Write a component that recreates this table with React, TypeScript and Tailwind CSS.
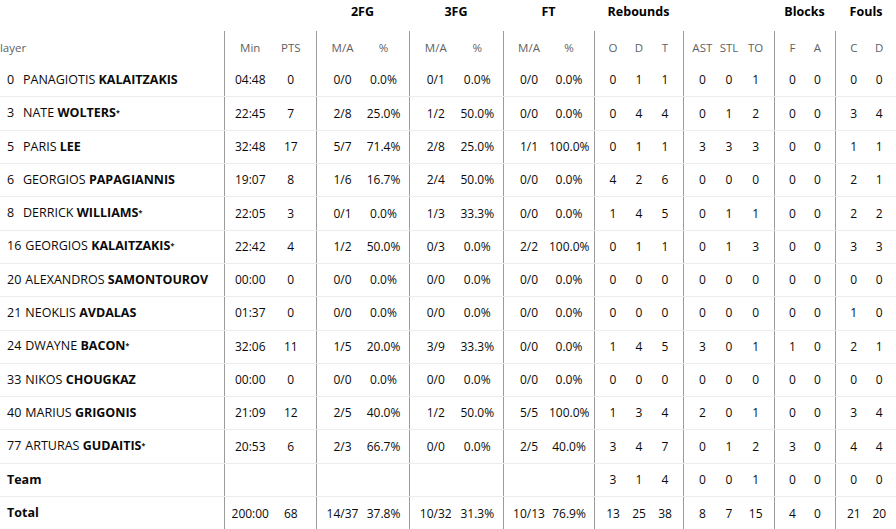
import React from "react";

type Row = {
  no: string;
  first: string;
  last: string;
  star: boolean;
  v: string[];
};

const raw: [string, string, string, boolean, string][] = [
  ["0", "PANAGIOTIS", "KALAITZAKIS", false, "04:48 0 0/0 0.0% 0/1 0.0% 0/0 0.0% 0 1 1 0 0 1 0 0 0 0"],
  ["3", "NATE", "WOLTERS", true, "22:45 7 2/8 25.0% 1/2 50.0% 0/0 0.0% 0 4 4 0 1 2 0 0 3 4"],
  ["5", "PARIS", "LEE", false, "32:48 17 5/7 71.4% 2/8 25.0% 1/1 100.0% 0 1 1 3 3 3 0 0 1 1"],
  ["6", "GEORGIOS", "PAPAGIANNIS", false, "19:07 8 1/6 16.7% 2/4 50.0% 0/0 0.0% 4 2 6 0 0 0 0 0 2 1"],
  ["8", "DERRICK", "WILLIAMS", true, "22:05 3 0/1 0.0% 1/3 33.3% 0/0 0.0% 1 4 5 0 1 1 0 0 2 2"],
  ["16", "GEORGIOS", "KALAITZAKIS", true, "22:42 4 1/2 50.0% 0/3 0.0% 2/2 100.0% 0 1 1 0 1 3 0 0 3 3"],
  ["20", "ALEXANDROS", "SAMONTOUROV", false, "00:00 0 0/0 0.0% 0/0 0.0% 0/0 0.0% 0 0 0 0 0 0 0 0 0 0"],
  ["21", "NEOKLIS", "AVDALAS", false, "01:37 0 0/0 0.0% 0/0 0.0% 0/0 0.0% 0 0 0 0 0 0 0 0 1 0"],
  ["24", "DWAYNE", "BACON", true, "32:06 11 1/5 20.0% 3/9 33.3% 0/0 0.0% 1 4 5 3 0 1 1 0 2 1"],
  ["33", "NIKOS", "CHOUGKAZ", false, "00:00 0 0/0 0.0% 0/0 0.0% 0/0 0.0% 0 0 0 0 0 0 0 0 0 0"],
  ["40", "MARIUS", "GRIGONIS", false, "21:09 12 2/5 40.0% 1/2 50.0% 5/5 100.0% 1 3 4 2 0 1 0 0 3 4"],
  ["77", "ARTURAS", "GUDAITIS", true, "20:53 6 2/3 66.7% 0/0 0.0% 2/5 40.0% 3 4 7 0 1 2 3 0 4 4"],
];

const rows: Row[] = raw.map(([no, first, last, star, v]) => ({
  no,
  first,
  last,
  star,
  v: v.split(" "),
}));

const teamVals = ["", "", "", "", "", "", "", "", "3", "1", "4", "0", "0", "1", "0", "0", "0", "0"];
const totalVals = "200:00 68 14/37 37.8% 10/32 31.3% 10/13 76.9% 13 25 38 8 7 15 4 0 21 20".split(" ");

const groups = [
  { w: "w-[92px]", cols: "grid-cols-2", n: 2, label: "", subs: ["Min", "PTS"] },
  { w: "w-[93px]", cols: "grid-cols-2", n: 2, label: "2FG", subs: ["M/A", "%"] },
  { w: "w-[94px]", cols: "grid-cols-2", n: 2, label: "3FG", subs: ["M/A", "%"] },
  { w: "w-[91px]", cols: "grid-cols-2", n: 2, label: "FT", subs: ["M/A", "%"] },
  { w: "w-[89px]", cols: "grid-cols-3", n: 3, label: "Rebounds", subs: ["O", "D", "T"] },
  { w: "w-[91px]", cols: "grid-cols-3", n: 3, label: "", subs: ["AST", "STL", "TO"] },
  { w: "w-[61px]", cols: "grid-cols-2", n: 2, label: "Blocks", subs: ["F", "A"] },
  { w: "w-[62px]", cols: "grid-cols-2", n: 2, label: "Fouls", subs: ["C", "D"] },
];

function splitVals(vals: string[]): string[][] {
  const out: string[][] = [];
  let i = 0;
  for (const g of groups) {
    out.push(vals.slice(i, i + g.n));
    i += g.n;
  }
  return out;
}

function StatCells({ vals }: { vals: string[] }) {
  const parts = splitVals(vals);
  return (
    <>
      {groups.map((g, gi) => (
        <div
          key={gi}
          className={`${g.w} flex-none h-full border-l border-[#9c9c9c] px-[5px] grid ${g.cols} items-center`}
        >
          {parts[gi].map((t, ti) => (
            <div key={ti} className="text-center whitespace-nowrap">
              {t}
            </div>
          ))}
        </div>
      ))}
    </>
  );
}

export default function App() {
  return (
    <div
      className="w-[896px] h-[529px] overflow-hidden bg-white text-[#0a0a0a] text-[12px]"
      style={{ fontFamily: '"Open Sans", "Noto Sans", sans-serif' }}
    >
      <div className="w-[920px]">
        {/* group header row */}
        <div className="flex h-[31px]">
          <div className="w-[224px] flex-none" />
          {groups.map((g, gi) => (
            <div
              key={gi}
              className={`${g.w} flex-none flex justify-center pt-[3px] text-[12.5px] font-bold text-black`}
            >
              {g.label}
            </div>
          ))}
        </div>
        {/* sub header row */}
        <div className="flex h-[33.2px] text-[#5f5f5f] text-[11.5px]">
          <div className="w-[224px] flex-none flex items-center">
            <span className="-ml-[7px]">Player</span>
          </div>
          {groups.map((g, gi) => (
            <div
              key={gi}
              className={`${g.w} flex-none h-full border-l border-[#9c9c9c] px-[5px] grid ${g.cols} items-center`}
            >
              {g.subs.map((s) => (
                <div key={s} className="text-center whitespace-nowrap">
                  {s}
                </div>
              ))}
            </div>
          ))}
        </div>
        {/* players */}
        {rows.map((r) => (
          <div key={r.no} className="flex h-[33.3px] border-b border-[#ececec]">
            <div className="w-[224px] flex-none flex items-center pl-[7px] whitespace-nowrap text-[12.5px]">
              <span className="min-w-[12px] mr-[4px] flex-none">{r.no}</span>
              <span>
                {r.first} <span className="font-bold">{r.last}</span>
                {r.star && <sup className="font-bold text-[7px] relative -top-[2px]">*</sup>}
              </span>
            </div>
            <StatCells vals={r.v} />
          </div>
        ))}
        {/* team */}
        <div className="flex h-[33.3px] border-b border-[#ececec]">
          <div className="w-[224px] flex-none flex items-center pl-[7px] font-bold text-[12.5px]">Team</div>
          <StatCells vals={teamVals} />
        </div>
        {/* total */}
        <div className="flex h-[33.3px]">
          <div className="w-[224px] flex-none flex items-center pl-[7px] font-bold text-[12.5px]">Total</div>
          <StatCells vals={totalVals} />
        </div>
      </div>
    </div>
  );
}
